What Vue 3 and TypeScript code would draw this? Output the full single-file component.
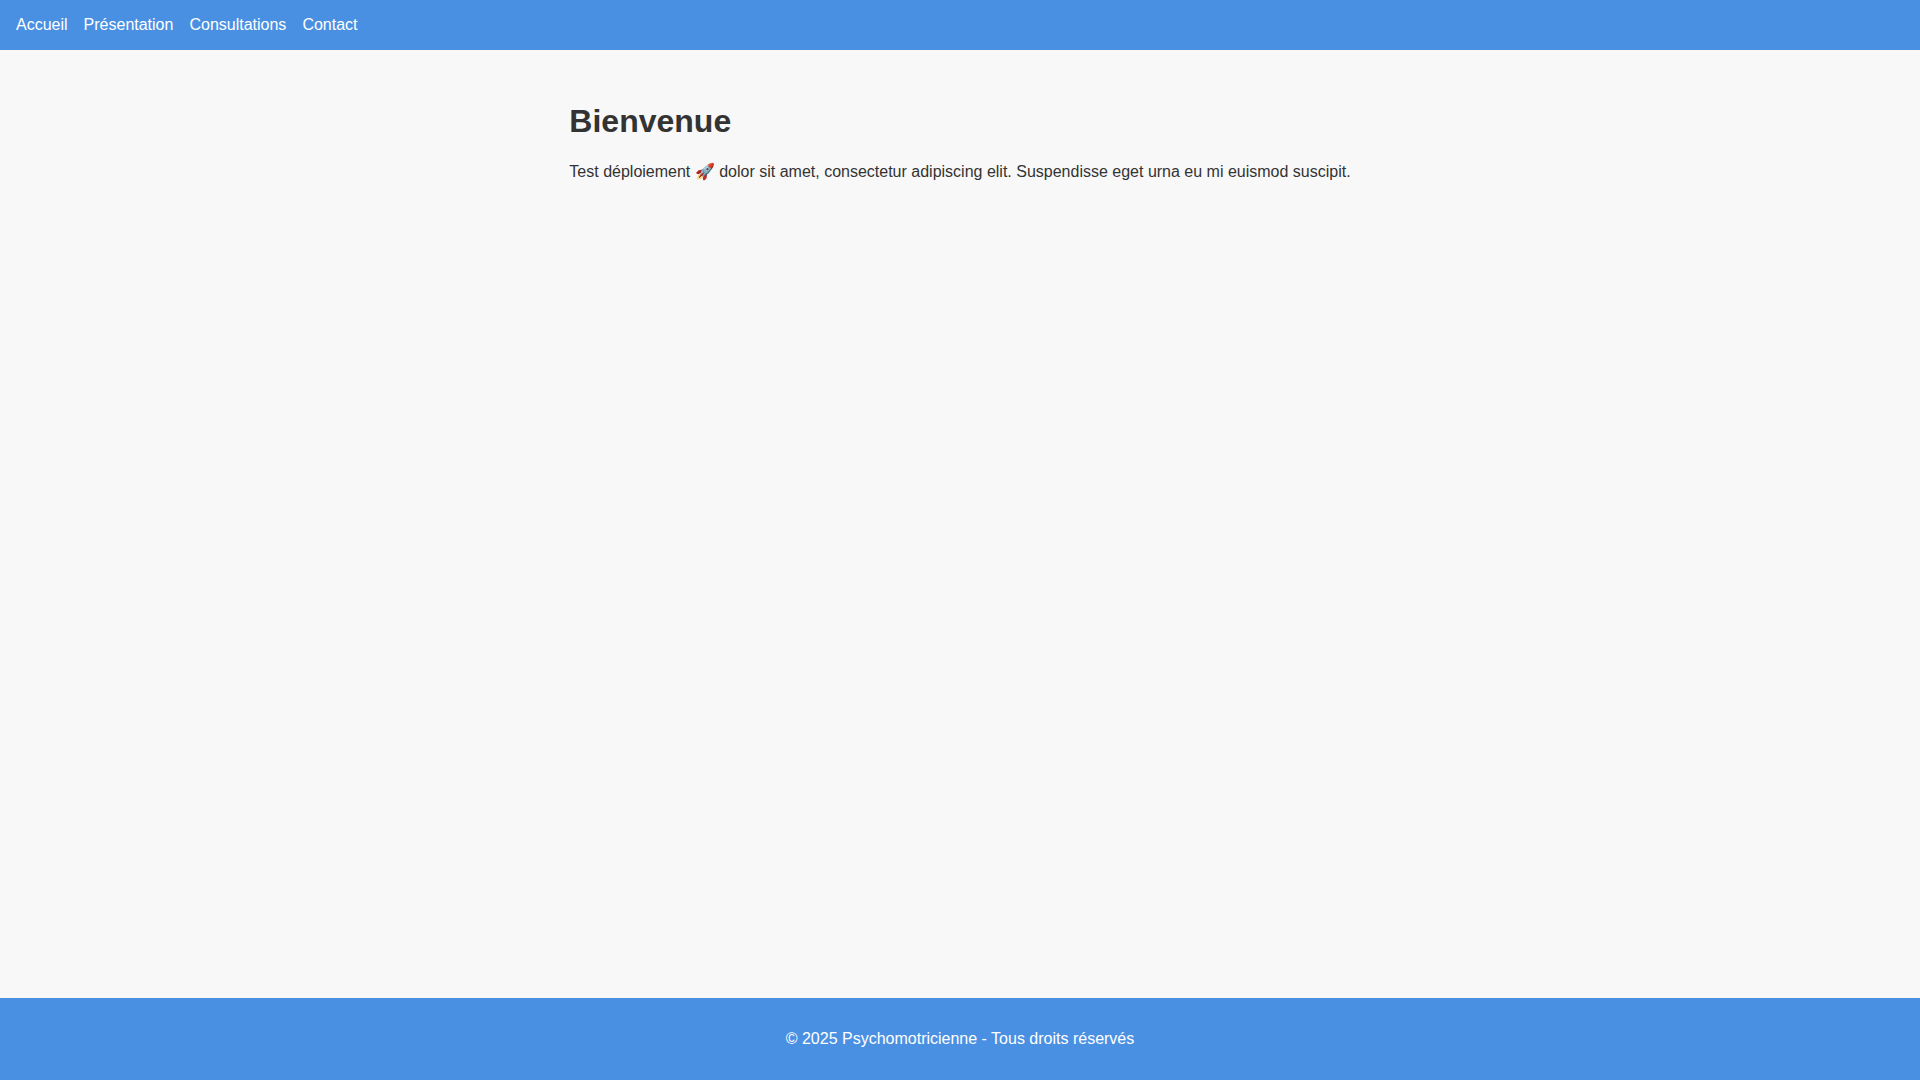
<script setup lang="ts">
interface NavLink {
  label: string
  href: string
}

const links: NavLink[] = [
  { label: 'Accueil', href: '#accueil' },
  { label: 'Présentation', href: '#presentation' },
  { label: 'Consultations', href: '#consultations' },
  { label: 'Contact', href: '#contact' },
]
</script>

<template>
  <div class="page">
    <header class="header">
      <nav>
        <ul class="menu">
          <li v-for="link in links" :key="link.href">
            <a class="menu-link" :href="link.href">{{ link.label }}</a>
          </li>
        </ul>
      </nav>
    </header>
    <main class="content">
      <h1>Bienvenue</h1>
      <p>Test déploiement 🚀 dolor sit amet, consectetur adipiscing elit. Suspendisse eget urna eu mi euismod suscipit.</p>
    </main>
    <footer class="footer">
      <p>© 2025 Psychomotricienne - Tous droits réservés</p>
    </footer>
  </div>
</template>

<style>
body {
  margin: 0;
  background: #f8f8f8;
}
</style>

<style scoped>
.page {
  display: flex;
  flex-direction: column;
  min-height: 100vh;
  font-family: 'Liberation Sans', Arial, sans-serif;
  font-size: 16px;
  color: #333;
}

.header {
  padding: 16px;
  background: #4a90e2;
}

.menu {
  display: flex;
  gap: 16px;
  margin: 0;
  padding: 0;
  list-style: none;
}

.menu-link {
  color: #fff;
  text-decoration: none;
}

.content {
  flex: 1;
  margin: 0 auto;
  padding: 32px;
}

.content h1 {
  font-size: 32px;
}

.content p {
  margin: 16px 0;
}

.footer {
  padding: 16px;
  background: #4a90e2;
  color: #fff;
  text-align: center;
}

.footer p {
  margin: 16px 0;
}
</style>
